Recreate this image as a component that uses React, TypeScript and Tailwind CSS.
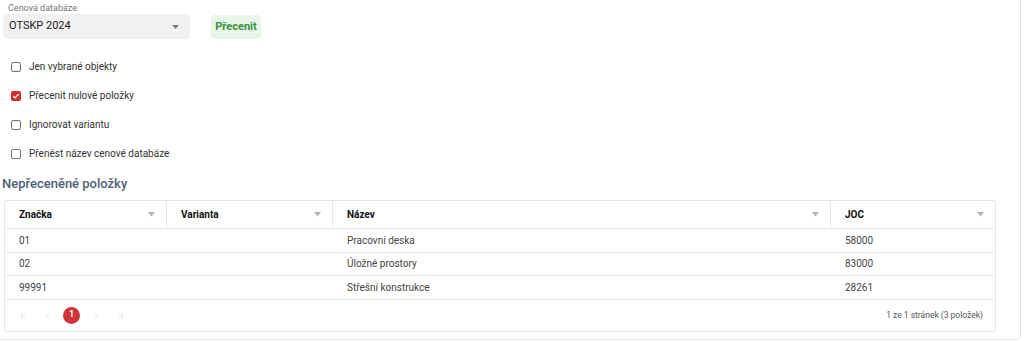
import { ChevronFirst, ChevronLast, ChevronLeft, ChevronRight } from 'lucide-react';

const columns = [
  { label: 'Značka', w: 'w-[162px]' },
  { label: 'Varianta', w: 'w-[166px]' },
  { label: 'Název', w: 'w-[498px]' },
  { label: 'JOC', w: 'flex-1' },
];

const rows = [
  ['01', '', 'Pracovní deska', '58000'],
  ['02', '', 'Úložné prostory', '83000'],
  ['99991', '', 'Střešní konstrukce', '28261'],
];

const options = [
  { label: 'Jen vybrané objekty', checked: false },
  { label: 'Přecenit nulové položky', checked: true },
  { label: 'Ignorovat variantu', checked: false },
  { label: 'Přenést název cenové databáze', checked: false },
];

const FilterIcon = () => (
  <svg width="7" height="5" viewBox="0 0 7 5" aria-hidden="true">
    <path d="M0 0h7L3.5 4.5z" fill="#b5b5b5" />
  </svg>
);

const Checkbox = ({ checked }: { checked: boolean }) =>
  checked ? (
    <span className="w-[10px] h-[10px] rounded-[2px] bg-[#d32f2f] flex items-center justify-center">
      <svg width="8" height="8" viewBox="0 0 8 8" aria-hidden="true">
        <path d="M1.3 4.2l1.8 1.7 3.6-3.8" stroke="white" strokeWidth="1.3" fill="none" />
      </svg>
    </span>
  ) : (
    <span className="w-[10px] h-[10px] rounded-[2px] border-[1.5px] border-[#6f6f6f] bg-white" />
  );

export default function App() {
  return (
    <div className="w-[1024px] h-[341px] bg-white overflow-hidden font-['Roboto',sans-serif]">
      <div className="w-[1021px] h-[340px] border-r border-b border-[#e3e3e3] rounded-br-[5px]">
        {/* price database */}
        <div className="pl-[3px] pt-[3px] flex items-end gap-[21px]">
          <div className="flex flex-col">
            <span className="text-[9px] text-[#757575] leading-[11px] pl-[5px]">Cenová databáze</span>
            <div className="w-[187px] h-[25px] bg-[#f1f1f1] rounded-[4px] flex items-center justify-between pl-[6px] pr-[11px]">
              <span className="text-[11px] text-[#222]">OTSKP 2024</span>
              <svg width="7" height="4" viewBox="0 0 7 4" aria-hidden="true">
                <path d="M0 0h7L3.5 4z" fill="#7a7a7a" />
              </svg>
            </div>
          </div>
          <button className="w-[50px] h-[24px] bg-[#e8f5e9] rounded-[4px] text-[11px] font-bold text-[#3a8f3e] flex items-center justify-center">
            Přecenit
          </button>
        </div>

        {/* options */}
        <div className="pl-[11px] pt-[13px] flex flex-col">
          {options.map((o) => (
            <div key={o.label} className="h-[29px] flex items-center gap-[8px]">
              <Checkbox checked={o.checked} />
              <span className="text-[10px] text-[#333]">{o.label}</span>
            </div>
          ))}
        </div>

        <h2 className="pl-[2px] pt-[7px] text-[13px] leading-[18px] font-medium text-[#4d6172]">Nepřeceněné položky</h2>

        {/* table */}
        <div className="ml-[4px] mt-[7px] w-[992px] border border-[#e6e6e6] rounded-[2px]">
          <div className="flex h-[28px] border-b border-[#e6e6e6]">
            {columns.map((c, i) => (
              <div
                key={c.label}
                className={`${c.w} flex items-center justify-between pl-[14px] pr-[11px] ${i < 3 ? 'border-r border-[#e6e6e6]' : ''}`}
              >
                <span className="text-[10px] font-bold text-[#111]">{c.label}</span>
                <FilterIcon />
              </div>
            ))}
          </div>
          {rows.map((r) => (
            <div key={r[0]} className="flex h-[23.5px] border-b border-[#e6e6e6]">
              {r.map((cell, i) => (
                <div key={i} className={`${columns[i].w} flex items-center pl-[14px]`}>
                  <span className="text-[10px] text-[#444]">{cell}</span>
                </div>
              ))}
            </div>
          ))}
          <div className="h-[31px] flex items-center justify-between pl-[6px] pr-[12px]">
            <div className="flex items-center text-[#c8c8c8]">
              <span className="w-[24px] flex justify-center"><ChevronFirst size={9} strokeWidth={1.5} /></span>
              <span className="w-[24px] flex justify-center"><ChevronLeft size={9} strokeWidth={1.5} /></span>
              <span className="w-[17px] h-[17px] rounded-full bg-[#d13438] text-white text-[9px] font-bold flex items-center justify-center mx-[4px]">1</span>
              <span className="w-[24px] flex justify-center"><ChevronRight size={9} strokeWidth={1.5} /></span>
              <span className="w-[24px] flex justify-center"><ChevronLast size={9} strokeWidth={1.5} /></span>
            </div>
            <span className="text-[8.5px] text-[#555]">1 ze 1 stránek (3 položek)</span>
          </div>
        </div>
      </div>
    </div>
  );
}
